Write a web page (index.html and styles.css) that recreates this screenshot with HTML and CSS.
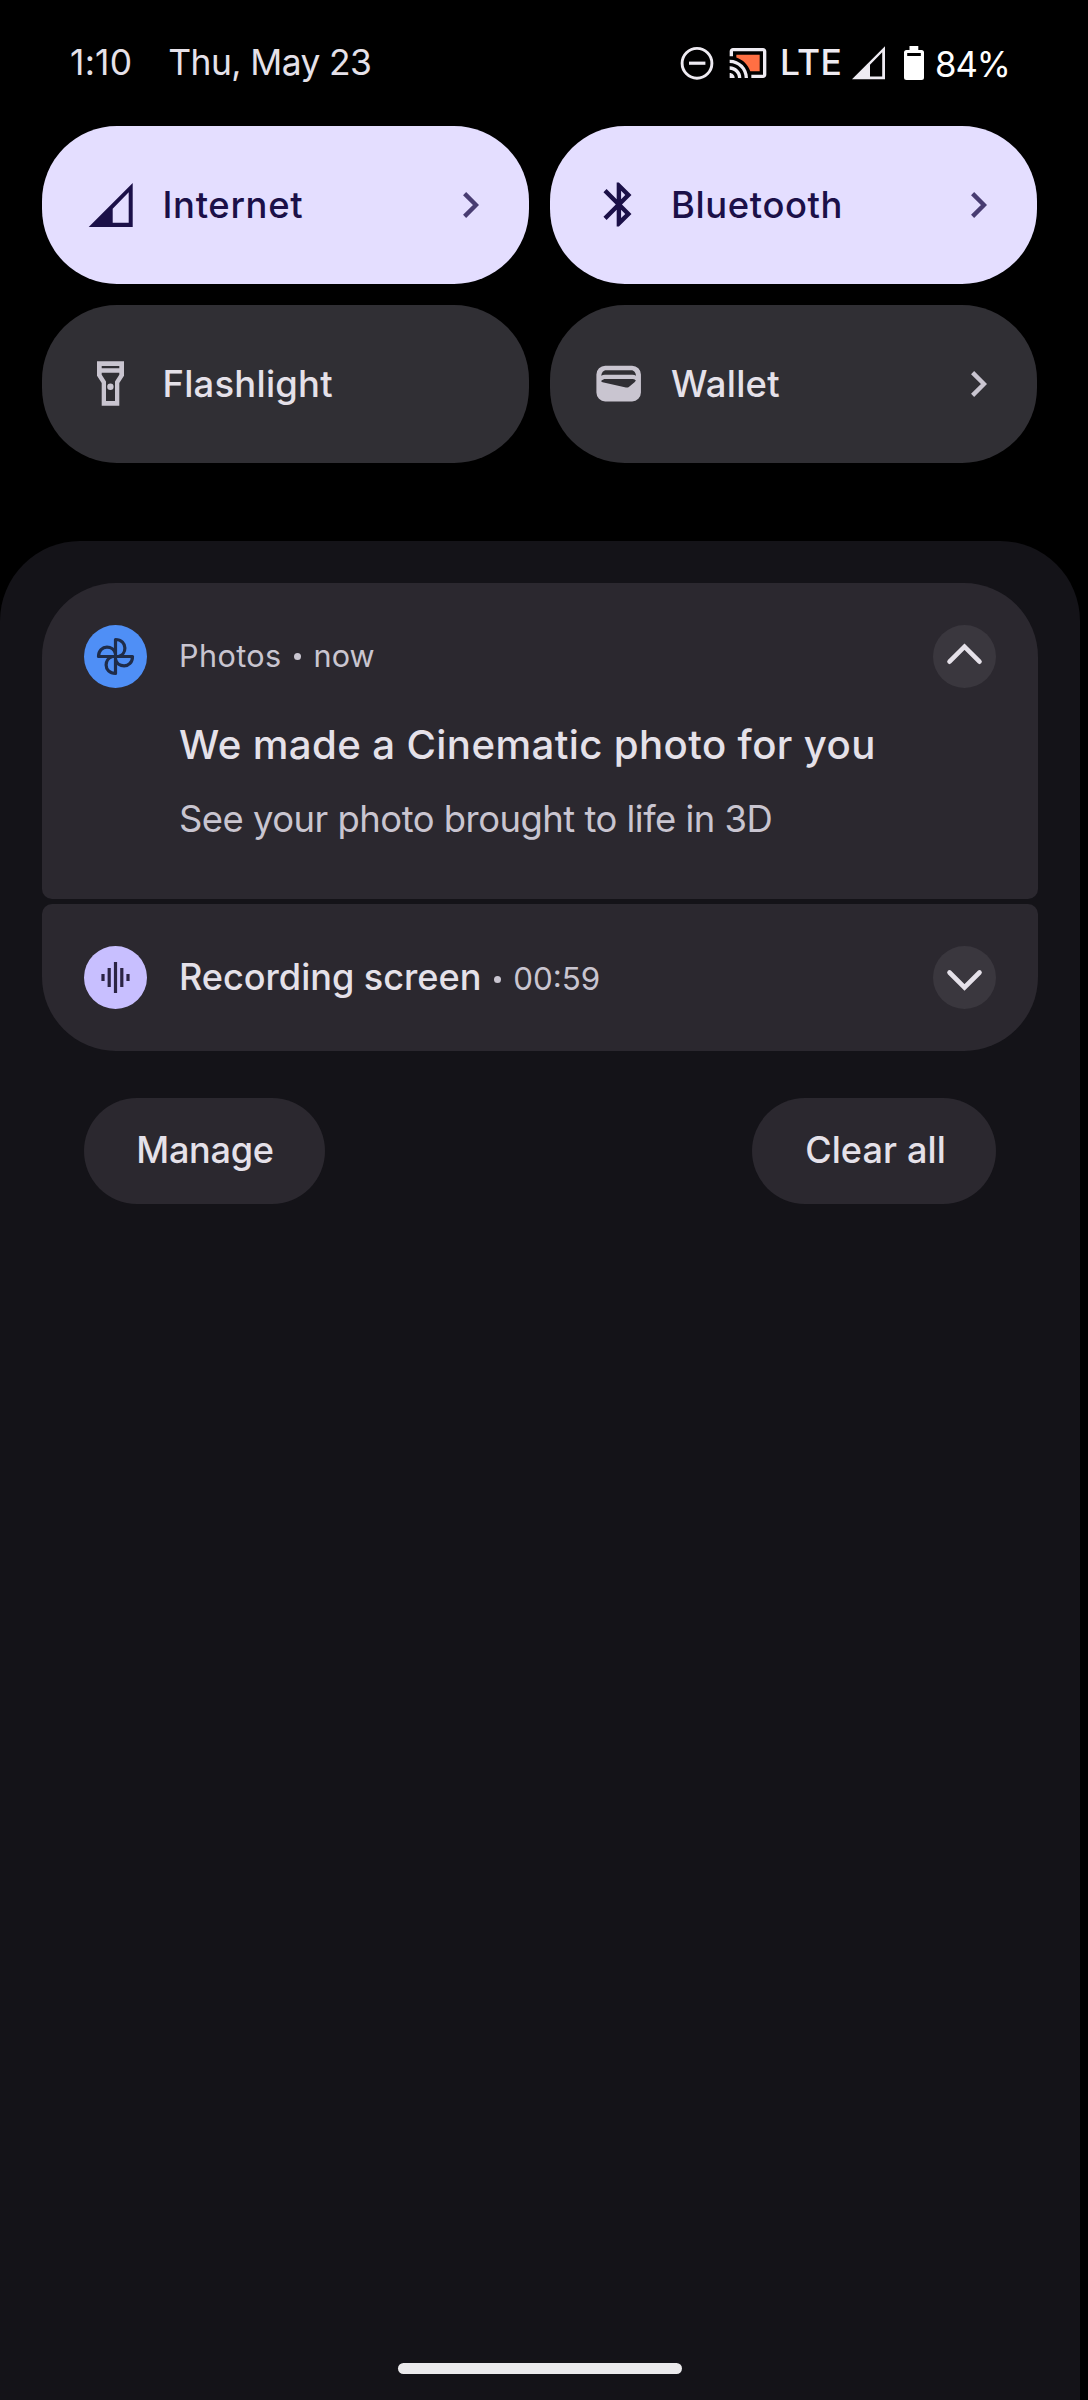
FILE: index.html
```html
<!DOCTYPE html>
<html lang="en">
<head>
<meta charset="utf-8">
<title>Notification shade</title>
<link rel="stylesheet" href="styles.css">
</head>
<body>
<main class="screen">
  <header class="status">
    <span class="time">1:10</span>
    <span class="date">Thu, May 23</span>
    <div class="indicators">
      <svg class="dnd" viewBox="0 0 34 34"><circle cx="17" cy="17.3" r="14.9" fill="none" stroke="#eeebf2" stroke-width="2.9"/><path d="M9 17.2h16.4" stroke="#eeebf2" stroke-width="3.2"/></svg>
      <svg class="cast" viewBox="0 0 24 24"><path fill="#ff6f43" d="M19 7H5v1.63c3.96 1.28 7.09 4.41 8.37 8.37H19z"/><path fill="#eeebf2" d="M1 18v3h3c0-1.66-1.34-3-3-3zm0-4v2c2.76 0 5 2.24 5 5h2c0-3.87-3.13-7-7-7zm0-4v2c4.97 0 9 4.03 9 9h2c0-6.08-4.93-11-11-11zm20-7H3c-1.1 0-2 .9-2 2v3h2V5h18v14h-7v2h7c1.1 0 2-.9 2-2V5c0-1.1-.9-2-2-2z"/></svg>
      <span class="network">LTE</span>
      <svg class="signal" viewBox="0 0 33 34"><path fill="#eeebf2" fill-rule="evenodd" d="M0 33.3 33 .3v33zM18 18.8V30.6H30.2V6.3z"/></svg>
      <svg class="battery" viewBox="0 0 20 34"><path fill="#fff" fill-rule="evenodd" d="M5.5 0h8.8v4H17.5A2.5 2.5 0 0 1 20 6.5V31.5A2.5 2.5 0 0 1 17.5 34H2.5A2.5 2.5 0 0 1 0 31.5V6.5A2.5 2.5 0 0 1 2.5 4h3zM3.2 6.9v3.1h13.6V6.9z"/></svg>
      <span class="percent">84%</span>
    </div>
  </header>

  <section class="tiles">
    <div class="tile on">
      <svg class="glyph" viewBox="0 0 54 54"><path fill-rule="evenodd" d="M4.7 49 48.7 5v44zM28.7 30.7v14H44.7V14.3z"/></svg>
      <span class="label internet">Internet</span>
      <svg class="arrow" viewBox="0 0 16 26"><path d="M1.6 1.6 13 13 1.6 24.4"/></svg>
    </div>
    <div class="tile on">
      <svg class="glyph" viewBox="-.2 0 24.5 24.5"><path d="M17.71 7.71 12 2h-1v7.59L6.41 5 5 6.41 10.59 12 5 17.59 6.41 19 11 14.41V22h1l5.71-5.71-4.3-4.29zM13 5.83l1.88 1.88L13 9.59zm1.88 10.46L13 18.17v-3.76z"/></svg>
      <span class="label bluetooth">Bluetooth</span>
      <svg class="arrow" viewBox="0 0 16 26"><path d="M1.6 1.6 13 13 1.6 24.4"/></svg>
    </div>
    <div class="tile">
      <svg class="glyph" viewBox="0 0 54 54"><path fill-rule="evenodd" d="M13 4.3h27v14.5L35.3 26v22.7H17.7V26L13 18.8zM17.7 9v2.3h17.6V9zm0 6.7v2L22 24.6V44h9V24.6l4.3-6.9v-2z"/><circle cx="26.4" cy="29.7" r="3.2"/></svg>
      <span class="label flashlight">Flashlight</span>
    </div>
    <div class="tile">
      <svg class="glyph" viewBox="0 0 24.5 24.5"><path fill-rule="evenodd" d="M6 3.95h12.2a4 4 0 0 1 4 4v8.2a4 4 0 0 1-4 4H6a4 4 0 0 1-4-4V7.95a4 4 0 0 1 4-4zM4.2 8.5c.5-.3 1-.4 1.6-.4h12.6c.6 0 1.100.1 1.6.4-.2-1.400-.9-2.500-2.200-2.500H6.400C5.100 6 4.400 7.100 4.200 8.500zM5.600 10c-.5.2-1.400.6-1.400 1 0 .2.3.3.6.4l10.600 2.400c.5.1.9.1 1.300-.2l2.600-2.200c.4-.3.7-.6.5-.8-.4-.4-.9-.6-1.400-.6z"/></svg>
      <span class="label wallet">Wallet</span>
      <svg class="arrow" viewBox="0 0 16 26"><path d="M1.6 1.6 13 13 1.6 24.4"/></svg>
    </div>
  </section>

  <section class="shade">
    <article class="card photos">
      <div class="head">
        <svg class="badge" viewBox="-31.5 -31.5 63 63"><circle r="31.5" fill="#4f8ff6"/><g fill="none" stroke="#1f2c49" stroke-width="3.2" stroke-linejoin="round"><path id="blade" d="M0 0V-17C6-17 9.4-13 9.4-8.6 9.4-4.6 7-1 3 0"/><use href="#blade" transform="rotate(90)"/><use href="#blade" transform="rotate(180)"/><use href="#blade" transform="rotate(270)"/></g></svg>
        <span class="app">Photos</span><i class="dot"></i><span class="when">now</span>
        <svg class="toggle" viewBox="0 0 63 63"><circle cx="31.5" cy="31.5" r="31.5"/><path d="M16.5 36.7 31.5 21.7 46.5 36.7"/></svg>
      </div>
      <h2 class="title">We made a Cinematic photo for you</h2>
      <p class="body">See your photo brought to life in 3D</p>
    </article>
    <article class="card recording">
      <div class="head">
        <svg class="badge" viewBox="-31.5 -31.5 63 63"><circle r="31.5" fill="#c8bfff"/><path fill="none" stroke="#2b2444" stroke-width="3.2" d="M-12.5-3.4v6.8M-6.3-9.5v19M0-15.5v31M6.3-9.5v19M12.5-3.4v6.8"/></svg>
        <span class="name">Recording screen</span><i class="dot"></i><span class="elapsed">00:59</span>
        <svg class="toggle" viewBox="0 0 63 63"><circle cx="31.5" cy="31.5" r="31.5"/><path d="M16.5 26.5 31.5 41.5 46.5 26.5"/></svg>
      </div>
    </article>
    <div class="actions">
      <button class="pill manage">Manage</button>
      <button class="pill clear">Clear all</button>
    </div>
    <div class="handle"></div>
  </section>
</main>
</body>
</html>
```
FILE: styles.css
```css
* { box-sizing: border-box; margin: 0; padding: 0; }

body {
  background: #000;
  color: #e5e1e9;
  font-family: Inter, "Liberation Sans", sans-serif;
}

svg { display: block; flex: none; }

.screen {
  width: 1088px;
  height: 2400px;
  display: flex;
  flex-direction: column;
  overflow: hidden;
}

/* Status bar */
.status {
  height: 126px;
  padding-left: 70px;
  display: flex;
  align-items: center;
  font-size: 35.4px;
  line-height: 44px;
  white-space: nowrap;
}
.time { letter-spacing: .26px; }
.date { margin-left: 36px; letter-spacing: -.59px; }
.indicators { margin-left: auto; width: 408px; display: flex; align-items: center; }
.dnd { width: 34px; height: 34px; }
.cast { width: 40px; height: 40px; margin-left: 14px; }
.network { width: 62px; margin-left: 12px; font-weight: 500; letter-spacing: .4px; color: #eeebf2; }
.signal { width: 33px; height: 34px; margin-left: 10px; }
.battery { width: 20px; height: 34px; margin-left: 19px; }
.percent { margin-left: 11px; padding-top: 1px; font-size: 34.7px; letter-spacing: -1.08px; color: #fff; }

/* Quick settings */
.tiles {
  padding: 0 51px 0 42px;
  display: grid;
  grid-template-columns: 487px 487px;
  grid-auto-rows: 158px;
  gap: 21px;
}
.tile {
  display: flex;
  align-items: center;
  padding: 0 50px 0 42px;
  border-radius: 75px;
  background: #302f34;
  color: #e5e1e9;
}
.tile.on { background: #e4deff; color: #1b1048; }
.glyph { width: 54px; height: 54px; fill: #c9c5d0; }
.on .glyph { fill: #1b1048; }
.label { margin-left: 24.5px; padding-bottom: 1px; font-size: 36.4px; font-weight: 500; line-height: 46px; }
.internet { letter-spacing: .67px; }
.bluetooth { letter-spacing: .61px; margin-left: 25px; }
.flashlight { letter-spacing: .24px; }
.wallet { letter-spacing: .26px; margin-left: 25px; }
.arrow { width: 16px; height: 26px; margin-left: auto; fill: none; stroke: #c9c5d0; stroke-width: 4.4px; }
.on .arrow { stroke: #483c72; }

/* Notification shade */
.shade {
  width: 1080px;
  flex: 1;
  margin-top: 78px;
  padding: 42px 42px 26px;
  display: flex;
  flex-direction: column;
  border-radius: 80px 80px 0 0;
  background: #141318;
}
.card { padding: 42px; background: #2b282f; }
.photos { height: 316px; border-radius: 74px 74px 10px 10px; }
.recording { height: 147px; margin-top: 5px; border-radius: 10px 10px 74px 74px; }
.head { height: 63px; display: flex; align-items: center; white-space: nowrap; }
.badge { width: 63px; height: 63px; margin-right: 32px; }
.app, .when { padding-bottom: 2px; font-size: 30.6px; line-height: 38px; color: #c9c5d0; }
.app { letter-spacing: .4px; }
.dot { width: 7px; height: 7px; margin: 0 12.5px; border-radius: 50%; background: #c9c5d0; }
.recording .dot { margin-top: 4px; }
.toggle { width: 63px; height: 63px; margin-left: auto; fill: #3a373e; }
.toggle path { fill: none; stroke: #e5e1e9; stroke-width: 4.6px; stroke-linecap: round; }
.title { margin: 31px 0 0 95px; font-size: 40.2px; font-weight: 500; line-height: 52px; letter-spacing: .37px; white-space: nowrap; }
.body { margin: 24px 0 0 95px; font-size: 36.4px; line-height: 48px; letter-spacing: -.5px; color: #c9c5d0; white-space: nowrap; }
.name { padding-bottom: 2px; font-size: 36.1px; font-weight: 500; line-height: 46px; letter-spacing: -.02px; }
.elapsed { padding-top: 3px; font-size: 31.3px; line-height: 38px; color: #c9c5d0; }

.actions { margin: 47px 42px 0; display: flex; justify-content: space-between; }
.pill {
  height: 106px;
  padding-bottom: 2px;
  border: 0;
  border-radius: 53px;
  background: #2b282f;
  color: #e5e1e9;
  font: 500 36.1px/46px Inter, "Liberation Sans", sans-serif;
}
.manage { width: 241px; padding-left: 1px; letter-spacing: -.28px; }
.clear { width: 244px; padding-left: 3px; letter-spacing: .1px; }

.handle { width: 284px; height: 11px; margin: auto auto 0; border-radius: 6px; background: #ebeaec; }
```
